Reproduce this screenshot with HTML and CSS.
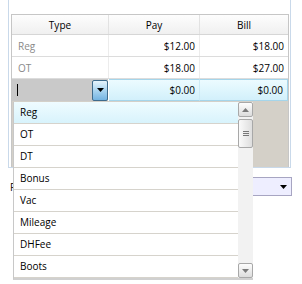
FILE: index.html
```html
<!DOCTYPE html>
<html lang="en">
<head>
    <meta charset="UTF-8">
    <title>Rate Grid</title>
    <link rel="stylesheet" href="styles.css">
</head>
<body>

<div class="panel">
    <div class="grid">
        <div class="row head">
            <div class="cell">Type</div>
            <div class="cell">Pay</div>
            <div class="cell">Bill</div>
        </div>
        <div class="row">
            <div class="cell type">Reg</div>
            <div class="cell num">$12.00</div>
            <div class="cell num">$18.00</div>
        </div>
        <div class="row">
            <div class="cell type">OT</div>
            <div class="cell num">$18.00</div>
            <div class="cell num">$27.00</div>
        </div>
        <div class="row edit">
            <div class="cell editor">
                <span class="caret"></span>
                <span class="drop-btn">
                    <svg width="7" height="4" viewBox="0 0 7 4"><path d="M0 0H7L3.5 4Z" fill="#000"/></svg>
                </span>
            </div>
            <div class="cell num">$0.00</div>
            <div class="cell num">$0.00</div>
        </div>
    </div>
</div>

<div class="field">
    <!-- label is mostly hidden under the open list -->
    <span class="label">R</span>
    <div class="combo">
        <svg width="7" height="4" viewBox="0 0 7 4"><path d="M0 0H7L3.5 4Z" fill="#000"/></svg>
    </div>
</div>

<!-- open dropdown list of the type editor -->
<div class="popup">
    <ul class="items">
        <li class="hot">Reg</li>
        <li>OT</li>
        <li>DT</li>
        <li>Bonus</li>
        <li>Vac</li>
        <li>Mileage</li>
        <li>DHFee</li>
        <li>Boots</li>
    </ul>
    <div class="scrollbar">
        <div class="sb-btn">
            <svg width="7" height="4" viewBox="0 0 7 4"><path d="M0 4H7L3.5 0Z" fill="#7a7a7a"/></svg>
        </div>
        <div class="sb-thumb">
            <span></span><span></span><span></span>
        </div>
        <div class="sb-track"></div>
        <div class="sb-btn">
            <svg width="7" height="4" viewBox="0 0 7 4"><path d="M0 0H7L3.5 4Z" fill="#7a7a7a"/></svg>
        </div>
    </div>
</div>

</body>
</html>
```

FILE: styles.css
```css
body {
    margin: 0;
    width: 302px;
    height: 284px;
    overflow: hidden;
    position: relative;
    background: #fff;
    font-family: "Open Sans", sans-serif;
    font-size: 10px;
    color: #000;
}

.panel {
    margin-left: 8px;
    width: 283px;
    box-sizing: border-box;
    border: 1px solid #c9d9ea;
    border-top: none;
    padding: 14px 1px 0 2px;
}

.grid {
    height: 153px;
    box-sizing: border-box;
    background: #d4d0c8;
    border: 1px solid #c6c6c6;
    border-bottom: none;
}

.row {
    display: grid;
    grid-template-columns: 97px 91px 1fr;
    height: 22px;
    box-sizing: border-box;
    background: #fff;
    border-bottom: 1px solid #dcdcdc;
}

.cell {
    display: flex;
    align-items: center;
    box-sizing: border-box;
    border-right: 1px solid #ececec;
    white-space: nowrap;
}

.cell:last-child {
    border-right: none;
}

.row.head {
    height: 20px;
    background: linear-gradient(to bottom, #fdfdfd, #f0f0f0);
    border-bottom: 1px solid #d6d6d6;
}

.row.head .cell {
    justify-content: center;
    border-right: 1px solid #e2e2e2;
}

.row.head .cell:last-child {
    border-right: none;
}

.type {
    padding-left: 6px;
    color: #8a8a8a;
}

.num {
    justify-content: flex-end;
    padding-right: 4px;
}

.row.edit {
    border-bottom: none;
    background: #d4d0c8;
}

.editor {
    background: #c9c9c9;
    border-right: 1px solid #fff;
    padding-left: 5px;
}

.caret {
    width: 1px;
    height: 12px;
    background: #000;
}

.drop-btn {
    margin-left: auto;
    width: 16px;
    height: 21px;
    box-sizing: border-box;
    border: 1px solid #3e6b8c;
    border-radius: 2px;
    background: linear-gradient(to bottom, #e6f4fc, #a9d4f0 50%, #74b4e2);
    display: flex;
    align-items: center;
    justify-content: center;
}

.row.edit .num {
    background: linear-gradient(to bottom, #ecfbff, #d2f0fb);
    border-top: 1px solid #a5d5ea;
    border-bottom: 1px solid #a5d5ea;
    border-right: 1px solid #cdeaf5;
}

.row.edit .num:last-child {
    border-right: 1px solid #a5d5ea;
}

.field {
    display: flex;
    align-items: center;
    margin-top: 9px;
    height: 19px;
}

.label {
    margin-left: 10px;
    width: 3px;
    overflow: hidden;
}

.combo {
    margin-left: auto;
    margin-right: 10px;
    width: 160px;
    height: 19px;
    box-sizing: border-box;
    border: 1px solid #a7a5c2;
    background: #eeeeff;
    display: flex;
    align-items: center;
    justify-content: flex-end;
    padding-right: 4px;
}

.popup {
    position: absolute;
    left: 13px;
    top: 102px;
    width: 240px;
    height: 178px;
    box-sizing: border-box;
    background: #fff;
    border-left: 1px solid #c8c8c8;
    border-bottom: 2px solid #d0d0d0;
    display: flex;
}

.items {
    flex: 1;
    list-style: none;
    margin: 0;
    padding: 0;
}

.items li {
    height: 22px;
    box-sizing: border-box;
    line-height: 21px;
    padding-left: 6px;
    border-bottom: 1px solid #d6d3cc;
}

.items li.hot {
    background: linear-gradient(to bottom, #effcff, #d8f3fc);
}

.scrollbar {
    width: 15px;
    display: flex;
    flex-direction: column;
    background: #f2f2f2;
}

.sb-btn {
    height: 15px;
    box-sizing: border-box;
    border: 1px solid #a8a8a8;
    border-radius: 2px;
    background: linear-gradient(to bottom, #fdfdfd, #dcdcdc);
    display: flex;
    align-items: center;
    justify-content: center;
}

.sb-thumb {
    margin-top: 2px;
    height: 29px;
    box-sizing: border-box;
    border: 1px solid #a8a8a8;
    border-radius: 2px;
    background: linear-gradient(to right, #fafafa, #dedede);
    display: flex;
    flex-direction: column;
    align-items: center;
    justify-content: center;
    gap: 1px;
}

.sb-thumb span {
    width: 6px;
    height: 1px;
    background: #777;
}

.sb-track {
    flex: 1;
}
```
